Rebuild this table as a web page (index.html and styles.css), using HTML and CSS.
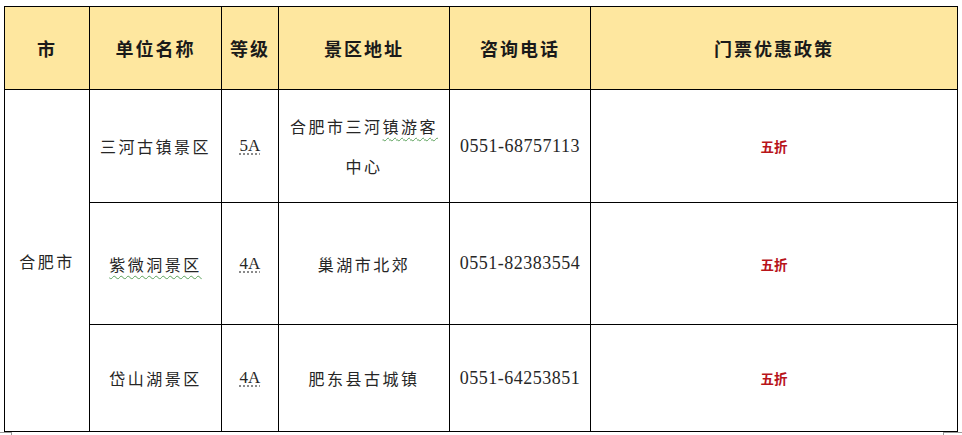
FILE: index.html
```html
<!DOCTYPE html>
<html lang="zh-CN">
<head>
<meta charset="utf-8">
<title>景区门票优惠政策</title>
<link rel="stylesheet" href="styles.css">
</head>
<body>
<div class="page">
  <table class="sheet">
    <colgroup>
      <col class="c-city">
      <col class="c-name">
      <col class="c-level">
      <col class="c-addr">
      <col class="c-tel">
      <col class="c-policy">
    </colgroup>
    <thead>
      <tr class="head">
        <th>市</th>
        <th>单位名称</th>
        <th>等级</th>
        <th>景区地址</th>
        <th>咨询电话</th>
        <th>门票优惠政策</th>
      </tr>
    </thead>
    <tbody>
      <tr class="r1">
        <td rowspan="3" class="cn">合肥市</td>
        <td class="cn">三河古镇景区</td>
        <td class="lat"><span class="dot">5A</span></td>
        <td class="cn">合肥市三河<span class="wavy">镇游客</span>中心</td>
        <td class="lat tel">0551-68757113</td>
        <td class="deal">五折</td>
      </tr>
      <tr class="r2">
        <td class="cn"><span class="wavy">紫微洞景区</span></td>
        <td class="lat"><span class="dot">4A</span></td>
        <td class="cn">巢湖市北郊</td>
        <td class="lat tel">0551-82383554</td>
        <td class="deal">五折</td>
      </tr>
      <tr class="r3">
        <td class="cn">岱山湖景区</td>
        <td class="lat"><span class="dot">4A</span></td>
        <td class="cn">肥东县古城镇</td>
        <td class="lat tel">0551-64253851</td>
        <td class="deal">五折</td>
      </tr>
    </tbody>
  </table>
  <span class="mark mark-left"></span>
  <span class="mark mark-right"></span>
</div>
</body>
</html>
```

FILE: styles.css
```css
html, body {
  margin: 0;
  padding: 0;
  background: #ffffff;
}

.page {
  position: relative;
  width: 962px;
  height: 435px;
  padding: 6px 0 0 4px;
  box-sizing: border-box;
}

.sheet {
  border-collapse: collapse;
  table-layout: fixed;
  width: 953px;
  font-family: "Noto Sans CJK SC", "Noto Sans", sans-serif;
  color: #1e1e1e;
}

.c-city { width: 85px; }
.c-name { width: 132px; }
.c-level { width: 57px; }
.c-addr { width: 171px; }
.c-tel { width: 141px; }
.c-policy { width: 367px; }

.sheet th,
.sheet td {
  border: 1.5px solid #000;
  text-align: center;
  vertical-align: middle;
  padding: 0 8px;
}

.head th {
  height: 82px;
  background: #fee79f;
  font-size: 18px;
  font-weight: 700;
  letter-spacing: 2px;
  color: #1a1a1a;
}

.r1 td { height: 112px; }
.r2 td { height: 121px; }
.r3 td { height: 106px; }

.cn {
  font-size: 16px;
  letter-spacing: 2.5px;
  line-height: 40px;
  font-weight: 400;
  color: #262626;
}

.lat {
  font-family: "Liberation Serif", "DejaVu Serif", serif;
  font-size: 17px;
  color: #262626;
  letter-spacing: 0;
  padding: 0 4px;
}

.tel {
  font-size: 18px;
  letter-spacing: 0.5px;
  padding-top: 3px;
}

.dot {
  text-decoration: underline dotted #777;
  text-underline-offset: 3px;
}

.wavy {
  text-decoration: underline wavy #5aa05a;
  text-decoration-thickness: 1px;
  text-underline-offset: 4px;
}

.deal {
  font-size: 13.5px;
  font-weight: 700;
  color: #b8141a;
}

.mark {
  position: absolute;
  top: 432px;
  height: 4px;
  border-top: 1px solid #9a9a9a;
}

.mark-left {
  left: 0;
  width: 11px;
  border-right: 1px solid #9a9a9a;
}

.mark-right {
  left: 943px;
  width: 19px;
  border-left: 1px solid #9a9a9a;
}
```
